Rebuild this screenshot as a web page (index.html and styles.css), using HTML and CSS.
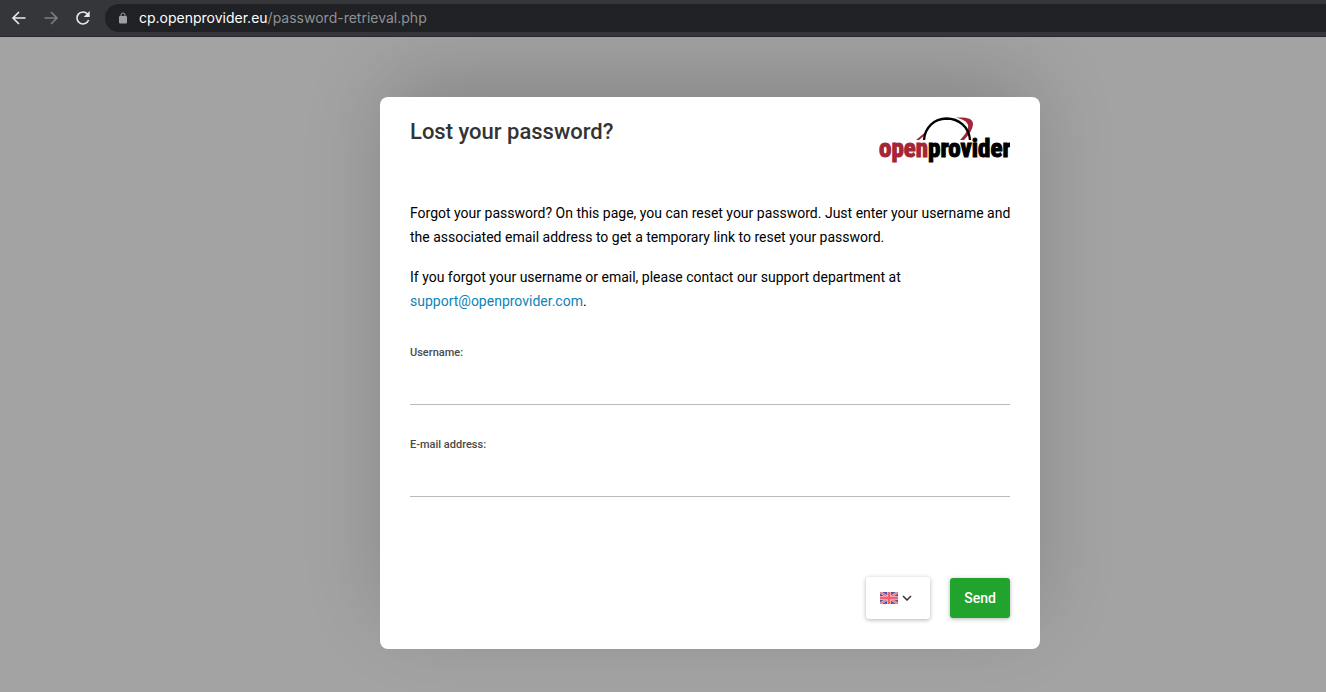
FILE: index.html
```html
<!DOCTYPE html>
<html lang="en">
<head>
    <meta charset="UTF-8">
    <meta name="viewport" content="width=device-width, initial-scale=1.0">
    <title>Lost your password?</title>
    <link rel="stylesheet" href="styles.css">
</head>
<body>
    <header class="toolbar">
        <button type="button" class="nav-button" aria-label="Back">
            <svg width="16" height="16" viewBox="0 0 16 16"><path d="M14.5 8H2M8 2L2 8l6 6"/></svg>
        </button>
        <button type="button" class="nav-button nav-disabled" aria-label="Forward" disabled>
            <svg width="16" height="16" viewBox="0 0 16 16"><path d="M1.500 8H14M8 2l6 6-6 6"/></svg>
        </button>
        <button type="button" class="nav-button" aria-label="Reload">
            <svg width="16" height="16" viewBox="0 0 16 16"><path d="M13.600 10A6 6 0 1 1 12.500 4"/><path class="arrow" d="M14.700 1v6H8.700z"/></svg>
        </button>
        <div class="address">
            <svg class="lock" width="10" height="12" viewBox="0 0 10 12"><rect x="1" y="4" width="8" height="7.500" rx="1"/><path d="M3 5V3a2 2 0 0 1 4 0v2"/></svg>
            <span class="host">cp.openprovider.eu</span><span class="path">/password-retrieval.php</span>
        </div>
    </header>
    <main class="page">
        <form class="card">
            <div class="card-header">
                <h1>Lost your password?</h1>
                <svg class="logo" width="132" height="48" viewBox="0 0 132 48" role="img" aria-label="openprovider">
                    <path class="logo-red" d="M38 23L47 15.500 46 19 41 23z"/>
                    <path class="logo-red" d="M78 0.500C88 0 94.500 1 95 6.500 95 12 91 18 86 23H82C88 17 91 11 90 8 89 4.500 85 2.500 78 0.500z"/>
                    <path class="logo-arc" d="M46 23C47 10 56 2 68.500 1.500 81 1.500 91 10 92 23"/>
                    <text x="1" y="40"><tspan class="logo-red">open</tspan><tspan>provider</tspan></text>
                </svg>
            </div>
            <p>Forgot your password? On this page, you can reset your password. Just enter your username and the associated email address to get a temporary link to reset your password.</p>
            <p>If you forgot your username or email, please contact our support department at <a href="mailto:support@openprovider.com">support@openprovider.com</a>.</p>
            <div class="field">
                <label for="username">Username:</label>
                <input type="text" id="username" name="username">
            </div>
            <div class="field">
                <label for="email">E-mail address:</label>
                <input type="email" id="email" name="email">
            </div>
            <div class="actions">
                <button type="button" class="language" aria-label="Language: English">
                    <svg width="18" height="12" viewBox="0 0 18 12">
                        <rect width="18" height="12" fill="#4f56a5"/>
                        <path d="M0 0l18 12M18 0L0 12" stroke="#e6b9c9" stroke-width="2.4"/>
                        <path d="M0 0l18 12M18 0L0 12" stroke="#f0616d" stroke-width="1"/>
                        <path d="M9 0v12M0 6h18" stroke="#f3b9c2" stroke-width="4"/>
                        <path d="M9 0v12M0 6h18" stroke="#f4606b" stroke-width="2.400"/>
                    </svg>
                    <svg class="chevron" width="10" height="6" viewBox="0 0 10 6"><path d="M1 1l4 4 4-4"/></svg>
                </button>
                <button type="submit" class="send">Send</button>
            </div>
        </form>
    </main>
</body>
</html>
```
FILE: styles.css
```css
* {
    box-sizing: border-box;
}

body {
    margin: 0;
    min-height: 100vh;
    display: flex;
    flex-direction: column;
    background-color: #a3a3a3;
    font-family: Roboto, Arial, sans-serif;
    font-size: 14px;
    line-height: 24px;
    color: #000000;
}

button,
input {
    font: inherit;
}

.toolbar {
    display: flex;
    align-items: center;
    height: 37px;
    padding-left: 11px;
    border-bottom: 1px solid #28292b;
    background-color: #35363a;
}

.nav-button {
    display: flex;
    width: 16px;
    margin-right: 16px;
    padding: 0;
    border: 0;
    background: none;
}

.nav-button svg {
    fill: none;
    stroke: #e8eaed;
    stroke-width: 1.6;
}

.nav-disabled svg {
    stroke: #7d7e81;
}

.nav-button .arrow {
    fill: #e8eaed;
    stroke: none;
}

.address {
    flex: 1;
    display: flex;
    align-items: center;
    height: 28px;
    margin-left: -2px;
    padding-left: 13px;
    border-radius: 14px 0 0 14px;
    background-color: #202124;
    font-family: Inter, Arial, sans-serif;
}

.lock {
    margin-right: 11px;
    fill: #9aa0a6;
}

.lock path {
    fill: none;
    stroke: #9aa0a6;
}

.host {
    color: #ffffff;
}

.path {
    color: #8f9296;
}

.page {
    flex: 1;
    padding: 60px 0 43px 94px;
    overflow: hidden;
}

.card {
    max-width: 660px;
    margin: 0 auto;
    padding: 20px 28px 30px 30px;
    border-radius: 8px;
    background-color: #ffffff;
    box-shadow: 0 -24px 80px -10px rgba(0, 0, 0, 0.2);
}

.card-header,
.field,
.actions {
    margin-right: 2px;
}

.card-header {
    display: flex;
    justify-content: space-between;
    margin-bottom: 36px;
}

h1 {
    margin: 0;
    font-size: 22px;
    font-weight: 500;
    line-height: 30px;
    color: #333333;
}

.logo text {
    font-family: "Roboto Condensed", "Liberation Sans Narrow", sans-serif;
    font-size: 25px;
    font-weight: bold;
    stroke: #000000;
    stroke-width: 1.1;
}

.logo .logo-red {
    fill: #a32638;
}

.logo text .logo-red {
    stroke: #a32638;
}

.logo-arc {
    fill: none;
    stroke: #000000;
    stroke-width: 2.3;
}

p {
    margin: 0 0 16px;
}

a {
    color: #0b84b8;
    text-decoration: none;
}

.field {
    margin-top: 32px;
}

.field label {
    display: block;
    font-size: 11px;
    font-weight: 500;
    line-height: 16px;
    color: #4a4a4a;
}

.field input {
    display: block;
    width: 100%;
    height: 44px;
    padding: 0;
    border: 0;
    border-bottom: 1px solid #bababa;
    background: none;
    outline: none;
}

.actions {
    display: flex;
    justify-content: flex-end;
    align-items: center;
    gap: 20px;
    margin-top: 80px;
}

.language,
.send {
    height: 42px;
    border: 0;
    border-radius: 3px;
    box-shadow: 0 1px 4px rgba(0, 0, 0, 0.3);
}

.language {
    display: flex;
    align-items: center;
    width: 64px;
    padding: 0 14px;
    background-color: #ffffff;
}

.chevron {
    margin-left: 4px;
    fill: none;
    stroke: #333333;
    stroke-width: 1.5;
}

.send {
    width: 60px;
    height: 40px;
    padding: 0;
    background-color: #22a32e;
    color: #ffffff;
    font-weight: 500;
}
```
